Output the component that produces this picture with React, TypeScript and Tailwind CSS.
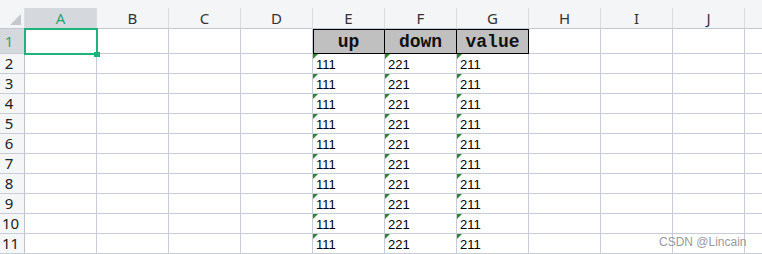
import React from "react";

const columns = ["A", "B", "C", "D", "E", "F", "G", "H", "I", "J"];
const dataRows = [2, 3, 4, 5, 6, 7, 8, 9, 10, 11];
const values: Record<string, string> = { E: "111", F: "221", G: "211" };
const titles: Record<string, string> = { E: "up", F: "down", G: "value" };

const uiFont = { fontFamily: '"Noto Sans", "Open Sans", sans-serif' };

function ColumnHeader({ label }: { label: string }) {
  const active = label === "A";
  return (
    <div
      className={`flex h-[21px] items-center justify-center border-b border-r border-b-[#c3c7cf] border-r-[#dadde2] text-[15px] ${
        active ? "bg-[#d5d8dd] text-[#1fa873]" : "bg-[#f4f5f7] text-[#333]"
      }`}
      style={uiFont}
    >
      {label}
    </div>
  );
}

function RowHeader({ n, tall }: { n: number; tall?: boolean }) {
  const active = n === 1;
  return (
    <div
      className={`flex items-center border-b border-r border-b-[#c7ccd6] border-r-[#bfc3cb] pl-[2px] text-[15px] ${
        tall ? "h-[25px]" : "h-[20px]"
      } ${active ? "bg-[#d5d8dd] text-[#1fa873]" : "bg-[#f5f6f8] text-[#222]"}`}
      style={uiFont}
    >
      <span className="w-[14px] text-center">{n}</span>
    </div>
  );
}

function TitleCell({ col }: { col: string }) {
  const title = titles[col];
  if (!title) {
    return <div className="h-[25px] border-b border-r border-[#c7ccd6] bg-white" />;
  }
  return (
    <div
      className={`flex h-[25px] items-center justify-center border-b border-r border-black bg-[#c0c0c0] pt-[2px] text-[18px] font-bold text-[#111] ${
        col === "E" ? "shadow-[inset_1px_1px_0_#000]" : "shadow-[inset_0_1px_0_#000]"
      }`}
      style={{ fontFamily: '"Liberation Mono", "DejaVu Sans Mono", monospace' }}
    >
      {title}
    </div>
  );
}

function DataCell({ col }: { col: string }) {
  const value = values[col];
  return (
    <div className="relative flex h-[20px] items-end border-b border-r border-[#c7ccd6] bg-white pb-[1px] pl-[3px]">
      {value && (
        <>
          <div className="absolute left-0 top-0 h-0 w-0 border-r-[5px] border-t-[5px] border-r-transparent border-t-[#2b8a2b]" />
          <span
            className="text-[13px] leading-[15px] text-black"
            style={{ fontFamily: '"Liberation Sans", Arial, sans-serif' }}
          >
            {value}
          </span>
        </>
      )}
    </div>
  );
}

export default function App() {
  return (
    <div className="relative h-[254px] w-[762px] overflow-hidden bg-white">
      <div className="h-[8px] bg-[#f4f5f7]" />
      <div className="grid grid-cols-[25px_repeat(10,72px)_1fr]">
        {/* corner */}
        <div className="relative h-[21px] border-b border-r border-b-[#c3c7cf] border-r-[#dadde2] bg-[#f4f5f7]">
          <div className="absolute left-[10px] top-[6px] h-[11px] w-[11px] bg-[#c4c7cc] [clip-path:polygon(100%_0,100%_100%,0_100%)]" />
        </div>
        {columns.map((c) => (
          <ColumnHeader key={c} label={c} />
        ))}
        <div className="h-[21px] border-b border-b-[#c3c7cf] bg-[#f4f5f7]" />

        {/* row 1 */}
        <RowHeader n={1} tall />
        {columns.map((c) => (
          <TitleCell key={c} col={c} />
        ))}
        <div className="h-[25px] border-b border-[#c7ccd6] bg-white" />

        {dataRows.map((n) => (
          <React.Fragment key={n}>
            <RowHeader n={n} />
            {columns.map((c) => (
              <DataCell key={c} col={c} />
            ))}
            <div className="h-[20px] border-b border-[#c7ccd6] bg-white" />
          </React.Fragment>
        ))}
      </div>

      {/* active cell selection */}
      <div className="absolute left-[24px] top-[28px] h-[27px] w-[74px] border-2 border-[#1fb37b]" />
      <div className="absolute left-[94px] top-[52px] h-[5px] w-[6px] bg-[#1fb37b]" />

      {/* watermark */}
      <div
        className="absolute left-[659px] top-[233px] text-[12px] text-[#9a9a9a]"
        style={{ fontFamily: '"Liberation Sans", Arial, sans-serif' }}
      >
        CSDN @Lincain
      </div>
    </div>
  );
}
